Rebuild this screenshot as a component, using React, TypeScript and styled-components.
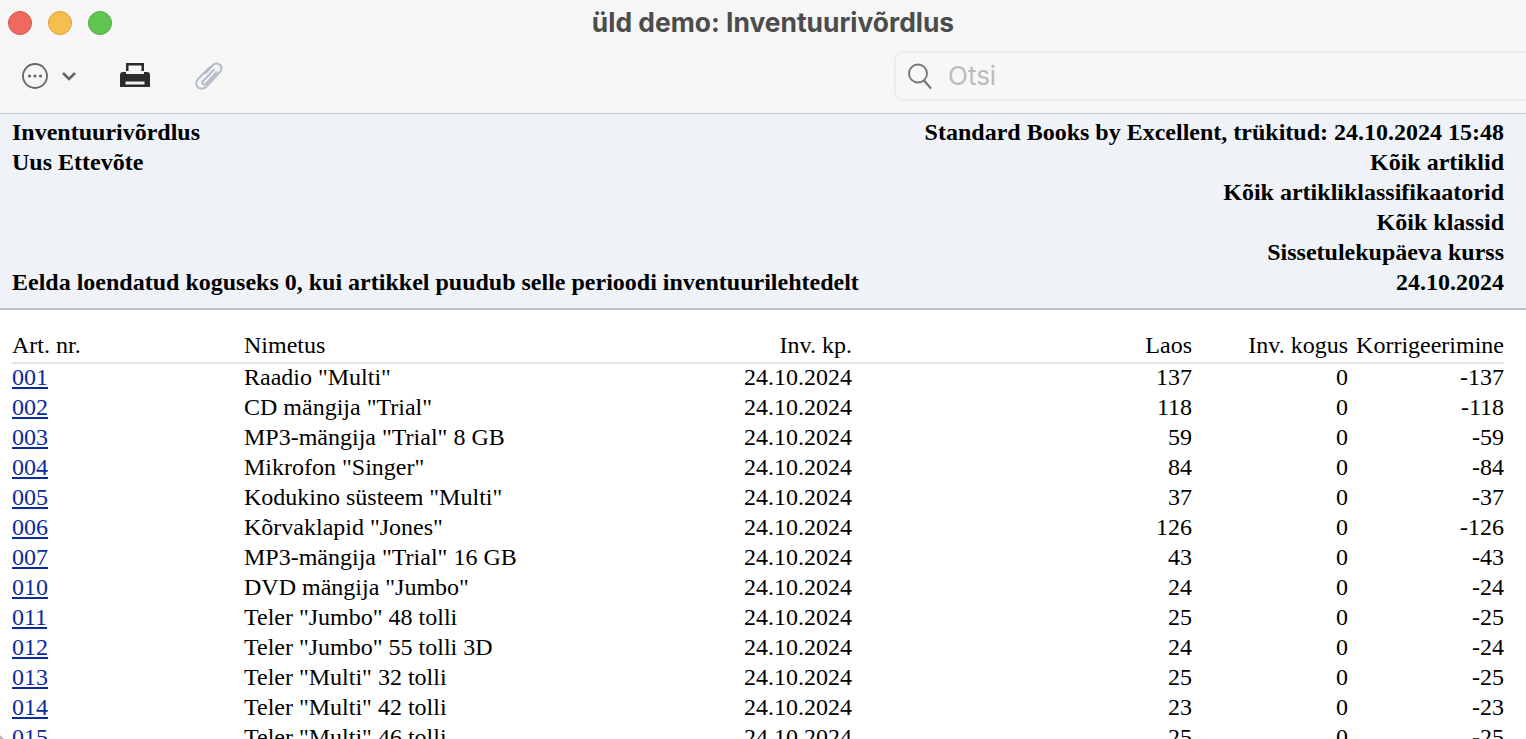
import React from 'react'
import styled, { createGlobalStyle } from 'styled-components'

const rows = [
  ['001', 'Raadio "Multi"', '137', '-137'],
  ['002', 'CD mängija "Trial"', '118', '-118'],
  ['003', 'MP3-mängija "Trial" 8 GB', '59', '-59'],
  ['004', 'Mikrofon "Singer"', '84', '-84'],
  ['005', 'Kodukino süsteem "Multi"', '37', '-37'],
  ['006', 'Kõrvaklapid "Jones"', '126', '-126'],
  ['007', 'MP3-mängija "Trial" 16 GB', '43', '-43'],
  ['010', 'DVD mängija "Jumbo"', '24', '-24'],
  ['011', 'Teler "Jumbo" 48 tolli', '25', '-25'],
  ['012', 'Teler "Jumbo" 55 tolli 3D', '24', '-24'],
  ['013', 'Teler "Multi" 32 tolli', '25', '-25'],
  ['014', 'Teler "Multi" 42 tolli', '23', '-23'],
  ['015', 'Teler "Multi" 46 tolli', '25', '-25'],
]

const App = () => {
  return (
    <Window>
      <GlobalStyle />
      <TitleBar>
        <Lights>
          <Light $color="#ee6a5f" $edge="#d5544a" />
          <Light $color="#f6be4f" $edge="#dc9f38" />
          <Light $color="#61c554" $edge="#4ca93f" />
        </Lights>
        <WindowTitle>üld demo: Inventuurivõrdlus</WindowTitle>
      </TitleBar>
      <Toolbar>
        <ToolGroup>
          <MoreButton>
            <svg width="28" height="28" viewBox="0 0 28 28">
              <circle cx="14" cy="14" r="12" fill="none" stroke="#666" strokeWidth="1.8" />
              <circle cx="8.5" cy="14" r="1.6" fill="#666" />
              <circle cx="14" cy="14" r="1.6" fill="#666" />
              <circle cx="19.5" cy="14" r="1.6" fill="#666" />
            </svg>
            <svg width="16" height="10" viewBox="0 0 16 10">
              <path d="M2 2 L8 8 L14 2" fill="none" stroke="#666" strokeWidth="2.6" />
            </svg>
          </MoreButton>
          <PrintButton>
            <svg width="32" height="26" viewBox="0 0 32 26">
              <path d="M7 1 H25 V9 H22.5 V3.5 H9.5 V9 H7 Z" fill="#2b2b2d" />
              <path d="M4 10 H7 V12 H25 V10 H28 Q31 10 31 13 V25 H1 V13 Q1 10 4 10 Z" fill="#2b2b2d" />
              <rect x="6.5" y="19.5" width="19" height="3" fill="#f0f0f0" />
            </svg>
          </PrintButton>
          <ClipButton>
            <svg width="28" height="30" viewBox="0 0 30 32">
              <path
                d="M11 13 L19 4.5 C22 1.5 27 2.5 28 6 C29 8.5 28 10.5 26 12.5 L13 26.5 C10 30 5.5 30.5 3 28 C0.5 25.5 1 21.5 4 18.5 L16 6.5 M20 9.5 L8.5 21.5 C6.5 24 9.5 26.5 11.5 24.5 L23 12"
                fill="none"
                stroke="#b4bcc8"
                strokeWidth="2.2"
                strokeLinecap="round"
              />
            </svg>
          </ClipButton>
        </ToolGroup>
        <SearchBox>
          <svg width="26" height="28" viewBox="0 0 26 28">
            <circle cx="11" cy="11.5" r="9" fill="none" stroke="#777" strokeWidth="1.9" />
            <path d="M17 18.5 L23.5 26" stroke="#777" strokeWidth="2.2" strokeLinecap="round" />
          </svg>
          <SearchText>Otsi</SearchText>
        </SearchBox>
      </Toolbar>
      <ReportHead>
        <HeadLine>
          <span>Inventuurivõrdlus</span>
          <span>Standard Books by Excellent, trükitud: 24.10.2024 15:48</span>
        </HeadLine>
        <HeadLine>
          <span>Uus Ettevõte</span>
          <span>Kõik artiklid</span>
        </HeadLine>
        <HeadLine>
          <span />
          <span>Kõik artikliklassifikaatorid</span>
        </HeadLine>
        <HeadLine>
          <span />
          <span>Kõik klassid</span>
        </HeadLine>
        <HeadLine>
          <span />
          <span>Sissetulekupäeva kurss</span>
        </HeadLine>
        <HeadLine>
          <span>Eelda loendatud koguseks 0, kui artikkel puudub selle perioodi inventuurilehtedelt</span>
          <span>24.10.2024</span>
        </HeadLine>
      </ReportHead>
      <Table>
        <HeaderRow>
          <span>Art. nr.</span>
          <span>Nimetus</span>
          <Num>Inv. kp.</Num>
          <Num>Laos</Num>
          <Num>Inv. kogus</Num>
          <Num>Korrigeerimine</Num>
        </HeaderRow>
        {rows.map((row) => (
          <Row key={row[0]}>
            <ArtLink href="#">{row[0]}</ArtLink>
            <span>{row[1]}</span>
            <Num>24.10.2024</Num>
            <Num>{row[2]}</Num>
            <Num>0</Num>
            <Num>{row[3]}</Num>
          </Row>
        ))}
      </Table>
      <CornerMark />
    </Window>
  )
}

const GlobalStyle = createGlobalStyle`
  html, body {
    margin: 0;
    padding: 0;
    height: 739px;
    overflow: hidden;
    background: #fff;
  }
`

const Window = styled.div`
  position: relative;
  width: 1526px;
  height: 739px;
  overflow: hidden;
  font-family: 'Liberation Serif', serif;
  font-size: 24px;
  line-height: 26px;
  color: #000;
`

const TitleBar = styled.div`
  position: relative;
  height: 45px;
  background: #f6f6f6;
`

const Lights = styled.div`
  position: absolute;
  left: 8px;
  top: 11px;
  display: flex;
  gap: 16px;
`

const Light = styled.div<{ $color: string; $edge: string }>`
  width: 24px;
  height: 24px;
  box-sizing: border-box;
  border-radius: 50%;
  background: ${(p) => p.$color};
  border: 1px solid ${(p) => p.$edge};
`

const WindowTitle = styled.div`
  padding: 7px 0 0 20px;
  text-align: center;
  font-family: 'Inter', sans-serif;
  font-size: 26.4px;
  line-height: 30px;
  font-weight: 700;
  color: #4c4c4c;
`

const Toolbar = styled.div`
  display: flex;
  justify-content: space-between;
  height: 68px;
  padding-left: 21px;
  background: #f6f6f6;
  border-bottom: 1px solid #c9ced6;
`

const ToolGroup = styled.div`
  display: flex;
  align-items: flex-start;
  padding-top: 16px;
`

const MoreButton = styled.div`
  display: flex;
  align-items: center;
  gap: 12px;
  width: 98px;
  padding-top: 1px;
`

const PrintButton = styled.div`
  width: 76px;
  padding-top: 1px;
  line-height: 0;
`

const ClipButton = styled.div`
  line-height: 0;
`

const SearchBox = styled.div`
  display: flex;
  align-items: center;
  gap: 15px;
  box-sizing: border-box;
  width: 632px;
  height: 50px;
  margin-top: 6px;
  padding-left: 11px;
  border: 2px solid #ececec;
  border-right: none;
  border-radius: 10px 0 0 10px;
  background: #f7f7f7;
`

const SearchText = styled.span`
  font-family: 'Inter', sans-serif;
  font-size: 26px;
  color: #bcbcbc;
`

const ReportHead = styled.div`
  padding: 5px 22px 9px 12px;
  background: #eff3f8;
  border-bottom: 2px solid #bdbfc2;
  font-weight: 700;
`

const HeadLine = styled.div`
  display: flex;
  justify-content: space-between;
  height: 30px;
`

const Table = styled.div`
  padding: 22px 22px 0 12px;
`

const Row = styled.div`
  display: grid;
  grid-template-columns: 232px 376px 232px 340px 156px 156px;
  height: 30px;
`

const HeaderRow = styled(Row)`
  height: 32px;
  border-bottom: 2px solid #e4e4e4;
  box-sizing: border-box;
`

const Num = styled.span`
  text-align: right;
`

const ArtLink = styled.a`
  color: #0b2a9e;
  text-decoration: underline;
`

const CornerMark = styled.div`
  position: absolute;
  left: 0;
  bottom: 0;
  width: 0;
  height: 0;
  border-left: 4px solid #b5b5b5;
  border-top: 4px solid transparent;
`

export default App
